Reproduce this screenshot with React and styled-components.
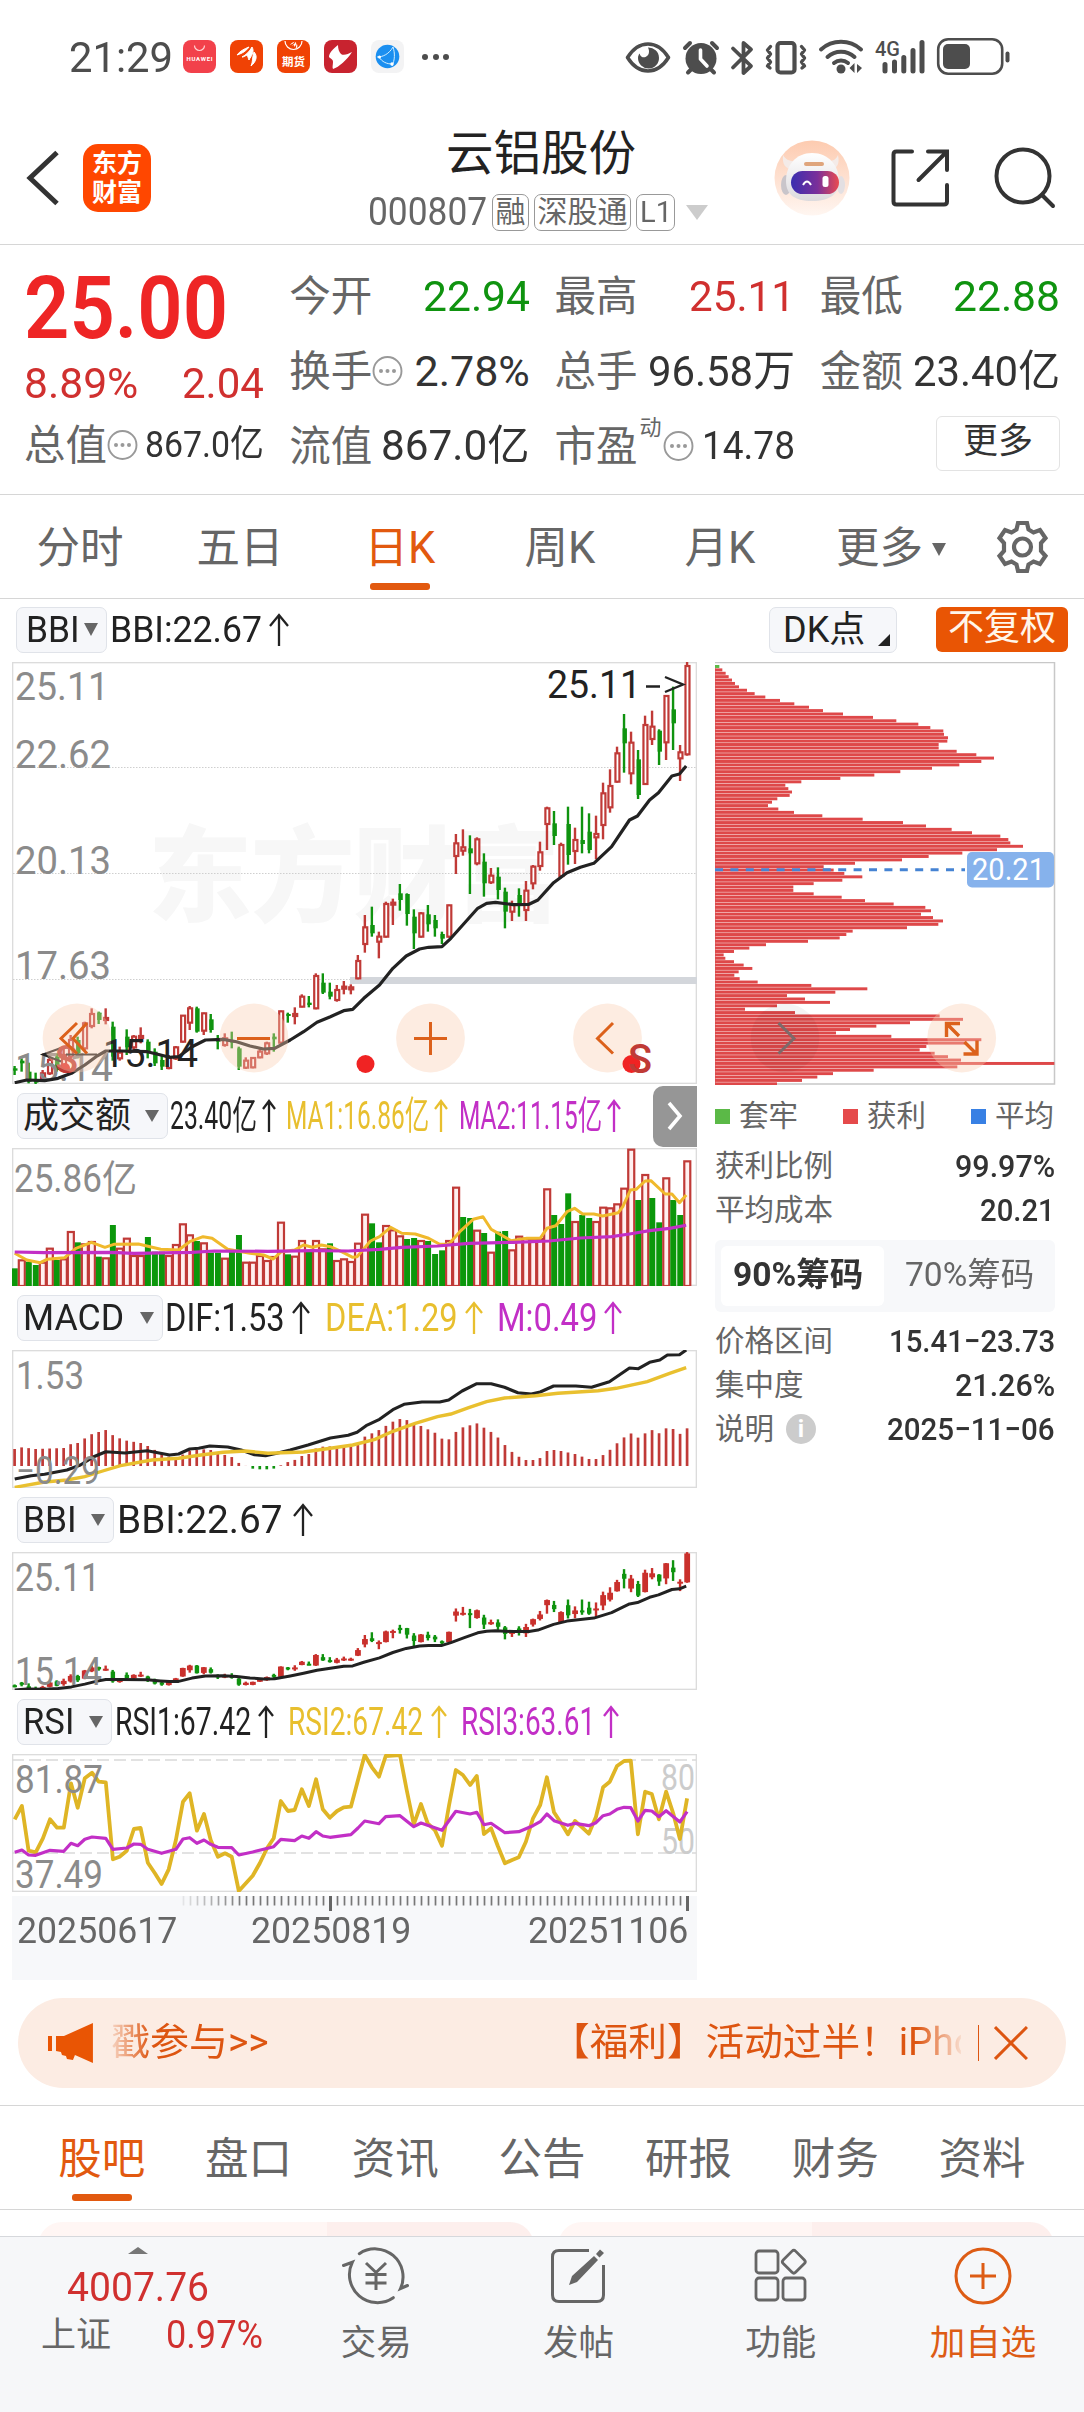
import { useLayoutEffect, useRef, useState } from 'react'
import styled, { createGlobalStyle } from 'styled-components'

const RED = '#c9302c'
const GREEN = '#0f930f'
const ORANGE = '#e95504'
const YELLOW = '#e8bf2e'
const PURPLE = '#c22fc6'
const BLACK = '#222'

const GlobalStyle = createGlobalStyle`
  * { box-sizing: border-box; }
  body {
    margin: 0;
    background: #fff;
    color: #333;
    font-family: Roboto, "Noto Sans CJK SC", sans-serif;
  }
`

/* ---------- data ---------- */

// one row per day: direction, high, body top, body bottom, low
const days = `g1428,1435,1442,1455 g1405,1412,1420,1445 g1418,1445,1475,1480 g1448,1470,1478,1484 r1440,1450,1465,1475
r1400,1410,1450,1455 g1390,1400,1440,1445 r1375,1395,1425,1440 r1335,1350,1400,1410 g1340,1350,1390,1405
r1295,1300,1375,1380 r1255,1272,1308,1315 g1265,1268,1290,1302 r1255,1284,1290,1303 g1295,1310,1400,1412
r1370,1388,1405,1412 g1318,1340,1372,1395 r1335,1340,1372,1380 r1312,1338,1342,1360 g1348,1355,1385,1405
g1375,1385,1420,1428 g1395,1410,1430,1440 r1395,1402,1434,1438 r1368,1372,1405,1410 r1275,1277,1355,1358
r1248,1255,1298,1320 g1250,1255,1325,1328 r1268,1270,1322,1335 g1272,1288,1320,1328 g1335,1345,1355,1378
r1330,1345,1365,1370 g1325,1350,1358,1375 g1370,1375,1430,1440 r1402,1412,1433,1437 r1402,1404,1432,1435
r1375,1385,1402,1405 r1355,1360,1390,1395 g1330,1340,1348,1385 r1262,1264,1358,1360 g1268,1272,1276,1298
r1252,1272,1278,1303 r1213,1220,1250,1252 g1218,1238,1245,1252 r1150,1158,1255,1258 g1150,1178,1208,1212
g1178,1205,1220,1228 r1185,1200,1230,1235 r1173,1190,1196,1213 r1183,1192,1198,1213 r1095,1113,1165,1168
r975,1012,1062,1088 g950,1005,1030,1040 r1025,1040,1055,1105 r935,942,1040,1043 r926,938,944,1005
g882,910,930,962 g910,912,972,1007 g958,980,1030,1077 r966,970,1040,1043 g945,973,1003,1025
g975,990,1015,1040 g1025,1032,1046,1062 r944,946,1040,1043 r732,760,798,852 r718,772,782,797
g736,775,790,912 r742,748,820,826 g790,815,880,920 r834,857,877,882 g832,860,900,928
g893,905,965,1015 r932,945,965,993 g895,915,945,980 r873,902,960,993 r825,830,880,898
r755,787,828,842 r650,655,702,780 g663,700,738,765 r758,765,858,862 g650,702,795,824
r713,750,783,822 g650,750,762,790 g670,725,780,790 r677,732,742,808 r578,610,705,748
r538,588,652,668 r470,490,575,578 g372,415,460,548 r425,458,550,583 g480,508,615,627
r377,405,582,585 r362,410,447,465 g418,422,485,525 r316,318,457,510 g290,358,400,480
r465,487,505,573 r216,228,493,497`
  .split(/\s+/)
  .map(s => [s[0], ...s.slice(1).split(',').map(Number)])

// negative = falling day
const volumes = [
  -565, 538, -545, -555, 545, 503, -540, 535, 453, -487, 490, 483, -530, 532, -435, 503, 473, 525, 525, -471,
  -515, -515, 525, 492, 430, 463, -483, 487, -518, -518, 533, -515, -465, 545, 545, 525, 540, 528, 425, -523,
  527, 480, -515, 480, 505, -490, 540, 535, 543, 488, 401, -430, -487, 435, 448, 466, -477, -474, 480, -483,
  -522, -511, 480, 320, -411, -414, 449, -459, 515, -455, -453, 508, 467, 473, 476, 474, 325, -405, -432, -340,
  423, -405, -414, 423, 380, 382, 370, 323, 206, -360, 282, -354, -427, 292, -360, -405, 241,
]

const pts = s => s.split(' ').map(p => p.split(',').map(Number))

const bbi = pts('33,1478 60,1470 100,1472 130,1465 160,1450 190,1425 215,1400 237,1383 270,1383 330,1385 360,1395 380,1402 400,1400 430,1370 460,1350 500,1348 530,1355 560,1368 590,1377 615,1375 650,1350 680,1325 710,1297 740,1280 770,1262 790,1258 815,1225 850,1185 880,1135 910,1098 940,1077 960,1072 990,1070 1010,1045 1040,1000 1070,955 1090,940 1110,937 1150,944 1185,943 1205,930 1240,878 1270,848 1300,832 1330,820 1370,770 1410,690 1428,678 1455,630 1475,608 1505,558 1522,552 1537,528')
const ma1 = pts('33,520 60,540 90,548 105,538 145,533 170,505 205,487 235,502 255,493 310,492 360,508 400,510 425,485 455,470 475,475 510,508 560,520 590,525 612,537 630,515 660,510 680,495 700,502 720,495 740,500 765,515 790,532 800,530 830,483 850,470 875,442 900,460 930,462 960,475 985,493 1005,493 1030,455 1060,418 1082,410 1100,448 1145,482 1180,475 1210,475 1225,445 1245,437 1270,395 1287,385 1305,402 1330,402 1350,408 1385,398 1395,380 1412,330 1425,328 1445,303 1458,302 1490,342 1505,342 1522,368 1537,345')
const ma2 = pts('33,516 100,518 250,517 300,520 430,517 480,513 600,514 700,512 780,513 850,508 900,502 980,498 1050,490 1150,487 1230,483 1300,474 1370,470 1410,462 1455,452 1500,445 1537,436')
const dif = pts('33,1197 70,1187 100,1183 150,1170 180,1155 210,1130 237,1115 280,1119 330,1112 380,1125 400,1122 425,1107 445,1105 470,1098 510,1101 540,1110 570,1124 595,1127 620,1120 650,1110 690,1095 740,1074 780,1066 800,1057 820,1037 850,1018 880,989 905,973 945,966 985,966 1005,960 1035,933 1068,911 1100,911 1130,922 1160,938 1190,942 1210,936 1240,918 1290,918 1325,922 1365,905 1410,864 1430,866 1455,847 1478,840 1495,825 1522,824 1537,810')
const dea = pts('33,1222 100,1206 150,1200 190,1190 230,1173 270,1157 340,1140 400,1135 450,1125 500,1117 550,1113 600,1120 680,1116 740,1105 790,1095 840,1078 880,1054 930,1030 980,1010 1010,1002 1050,983 1090,965 1130,954 1200,947 1250,940 1340,932 1380,925 1450,905 1500,880 1537,863')
const macd = pts('33,1107 49,1102 80,1107 143,1104 159,1092 174,1089 190,1075 206,1062 221,1056 237,1050 253,1066 268,1075 284,1082 315,1089 331,1098 347,1110 378,1130 394,1135 425,1112 441,1110 457,1108 472,1110 488,1120 504,1125 519,1131 535,1149 551,1158 566,1166 582,1168 598,1168 613,1166 629,1156 645,1146 660,1140 676,1128 692,1122 708,1105 723,1100 786,1097 802,1090 817,1070 849,1050 880,1025 896,1017 911,1020 943,1038 974,1058 990,1076 1006,1078 1021,1056 1037,1042 1068,1030 1100,1056 1115,1072 1131,1095 1147,1116 1162,1130 1178,1140 1194,1140 1210,1134 1225,1113 1241,1110 1257,1113 1288,1122 1304,1130 1319,1137 1335,1137 1351,1125 1366,1110 1382,1090 1398,1072 1413,1060 1429,1073 1445,1060 1460,1050 1476,1060 1492,1045 1508,1047 1523,1062 1539,1045')
const rsi2 = pts('33,988 49,948 64,1082 80,1087 96,1045 112,988 128,1013 143,1013 159,880 174,953 190,865 206,848 221,875 237,877 253,1108 268,1100 284,1082 300,1017 315,1014 331,1118 347,1150 362,1182 378,1138 394,1050 410,935 425,910 441,1022 457,972 472,1050 488,1100 504,1090 519,1100 535,1203 566,1157 582,1120 598,1075 613,1045 629,933 645,963 660,960 676,898 692,948 708,868 723,958 739,983 755,963 770,952 786,950 802,870 817,795 833,832 849,860 864,798 896,795 911,900 927,1003 943,942 958,1000 974,1020 990,1067 1006,945 1021,840 1037,855 1053,885 1068,858 1084,1032 1100,1015 1115,1068 1131,1120 1147,1110 1162,1102 1178,1055 1194,985 1210,945 1225,862 1241,967 1257,1000 1272,1033 1288,993 1304,1012 1319,1031 1335,980 1351,892 1366,875 1382,828 1398,813 1413,812 1429,1033 1445,905 1460,912 1476,988 1492,905 1508,970 1523,1047 1539,925')
const rsi3 = pts('33,1087 49,1080 64,1095 80,1096 112,1081 143,1084 159,1060 174,1067 190,1048 206,1041 237,1045 253,1078 284,1074 300,1062 315,1063 331,1078 362,1090 394,1078 410,1047 425,1043 441,1060 457,1050 472,1063 488,1072 519,1073 535,1095 566,1086 613,1070 629,1048 660,1052 676,1038 692,1045 708,1025 723,1038 739,1042 786,1034 802,1014 817,993 849,1001 864,980 896,977 927,1010 943,999 990,1021 1021,964 1053,972 1068,967 1084,1004 1100,1000 1131,1028 1162,1025 1194,1007 1210,995 1225,972 1241,992 1272,1006 1288,1000 1319,1007 1335,998 1351,977 1366,972 1382,958 1398,952 1413,953 1429,993 1445,961 1460,963 1476,980 1492,962 1523,996 1539,965')

const chips = [
  57, 66, 76, 85, 95, 104, 116, 140, 163, 195, 239, 282, 326, 368, 428, 518, 588, 654, 690, 729, 731, 743, 741,
  715, 715, 769, 828, 881, 843, 777, 695, 600, 522, 420, 303, 255, 264, 275, 268, 231, 215, 203, 234, 281, 366,
  487, 608, 677, 754, 815, 900, 924, 930, 968, 890, 786, 685, 605, 464, 370, 400, 432, 486, 426, 340, 279, 279,
  340, 424, 494, 580, 675, 692, 662, 698, 728, 714, 620, 457, 438, 418, 323, 197, 147, 101, 70, 75, 101, 130,
  156, 115, 102, 118, 172, 333, 501, 405, 260, 314, 389, 230, 134, 284, 718, 788, 629, 528, 449, 407, 573, 843,
  800, 678, 658, 703, 743, 782, 1062, 771, 520, 398, 351, 305, 230,
]

const dayX = i => 14.6 + i * 7.005
const line = (data, y) => data.map(([a, b]) => `${(a / 2.24).toFixed(1)},${y(b).toFixed(1)}`).join(' ')
const at = (data, x) => {
  const k = data.findIndex(p => p[0] >= x)
  if (k < 0) return data[data.length - 1][1]
  if (k === 0) return data[0][1]
  const [x0, y0] = data[k - 1]
  const [x1, y1] = data[k]
  return y0 + ((y1 - y0) * (x - x0)) / (x1 - x0)
}

/* ---------- text that shrinks or grows to its column ---------- */

const FitBox = styled.span`
  display: inline-block;
  flex: none;
  width: ${p => p.$w}px;
  white-space: nowrap;
  text-align: left;
`
const FitInner = styled.span`
  display: inline-block;
  transform-origin: 0 50%;
`
function Fit({ w, children }) {
  const ref = useRef(null)
  const [scale, setScale] = useState(1)
  useLayoutEffect(() => {
    setScale(w / ref.current.offsetWidth)
  }, [w, children])
  return (
    <FitBox $w={w}>
      <FitInner ref={ref} style={{ transform: `scaleX(${scale})` }}>{children}</FitInner>
    </FitBox>
  )
}

/* ---------- status bar ---------- */

const Page = styled.div`
  width: 1084px;
  height: 2412px;
  overflow: hidden;
  display: flex;
  flex-direction: column;
`
const StatusBar = styled.div`
  height: 113px;
  display: flex;
  align-items: center;
  padding: 0 74px 0 69px;
  color: #4d4d4d;
  font-size: 43px;
  line-height: 48px;
`
const AppIcons = styled.div`
  display: flex;
  gap: 14px;
  margin-left: 10px;
  svg { display: block; }
`
const More = styled.div`
  display: flex;
  gap: 4.5px;
  margin-left: 18px;
  i { width: 6px; height: 6px; border-radius: 50%; background: #4d4d4d; }
`
const Signals = styled.svg`
  display: block;
  margin-left: auto;
`

function StatusIcons() {
  return (
    <Signals width="386" height="40" viewBox="624 36 386 40" fill="none" stroke="#4d4d4d" strokeWidth="3.6" strokeLinecap="round" strokeLinejoin="round">
      <path d="M627.5 56.500Q636 43 648 43T668.500 56.500Q660 70 648 70T627.500 56.500Z" />
      <path d="M648 46.500a10.500 10.500 0 1 1-10 10.500c0-2 .8-3.500 1.500-4.500 1 3.500 4 4.500 6 3.500 3.500-1.500 4.500-5.500 2.500-9.500Z" fill="#4d4d4d" stroke="none" />
      <circle cx="701" cy="57.500" r="15.500" fill="#4d4d4d" stroke="none" />
      <path d="M700.500 49v9l6.500 7" stroke="#fff" strokeWidth="3.600" />
      <path d="M685 47l5-5M717 47l-5-5M688 71.500l3-3M714 71.500l-3-3" strokeWidth="4" />
      <path d="M733 47.500l18 17.500-7.500 7v-30l7.500 6.500-18 18" strokeWidth="3.800" />
      <rect x="777.500" y="42" width="17" height="29.500" rx="3" strokeWidth="4.200" />
      <path d="M770.500 45.500l-3 3.500 3 4-3 4 3 4-3 4 2.500 2M801.500 45.500l3 3.500-3 4 3 4-3 4 3 4-2.500 2" strokeWidth="3.400" />
      <path d="M821 48.500a30 30 0 0 1 40 0M827.500 56a20 20 0 0 1 27 0M834 62a11 11 0 0 1 14 0" strokeWidth="4" />
      <circle cx="841" cy="68" r="4.500" fill="#4d4d4d" stroke="none" />
      <path d="M849.500 67l5-5v10zM857 63l5 4-5 5z" fill="#4d4d4d" stroke="none" />
      <path d="M885 63.500v6.500M894.500 61v9M903.800 56.500V70M913 49.500V70M922 41.500V70" strokeWidth="5" />
      <text x="875" y="54.500" fontSize="20" fontWeight="500" fill="#4d4d4d" stroke="none" textLength="25" lengthAdjust="spacingAndGlyphs">4G</text>
      <rect x="938.200" y="38.200" width="64" height="34.500" rx="10" strokeWidth="2.600" />
      <rect x="943" y="43" width="27" height="25" rx="5" fill="#4d4d4d" stroke="none" />
      <path d="M1007.500 52.500v7" strokeWidth="4" />
    </Signals>
  )
}

const feather = 'M7 15c3-4 7-6 12-8-3 4-6 6-12 8zM12 17c4-2 8-6 10-10 3 5-1 9-3 13-1-2-1-4-2-5-2 1-3 2-5 2zM21 26c2-4 1-8 3-14 4 4 2 10-3 14z'

function Apps() {
  return (
    <AppIcons>
      <svg width="33" height="33" viewBox="0 0 33 33">
        <rect width="33" height="33" rx="8" fill="#f2414b" />
        <path d="M11.500 5.500a5 5 0 0 0 10 0" fill="none" stroke="#ffd3d3" strokeWidth="1.200" />
        <text x="3.500" y="21" fontSize="6" fontWeight="700" fill="#fff" textLength="26">HUAWEI</text>
      </svg>
      <svg width="33" height="33" viewBox="0 0 33 33">
        <rect width="33" height="33" rx="8" fill="#f04205" />
        <path d={feather} fill="#fff" stroke="#fff" strokeWidth="1" />
      </svg>
      <svg width="33" height="33" viewBox="0 0 33 33">
        <rect width="33" height="33" rx="8" fill="#f04205" />
        <path d="M8 1a8.500 8.500 0 0 0 17 0" fill="none" stroke="#fff" strokeWidth="1.200" />
        <path d={feather} fill="#fff" transform="translate(10 -1) scale(.4)" />
        <text x="5" y="26" fontSize="11.500" fontWeight="700" fill="#fff">期货</text>
      </svg>
      <svg width="33" height="33" viewBox="0 0 33 33">
        <rect width="33" height="33" rx="8" fill="#c8232f" />
        <path d="M14 5c-5 4-9 8-9 12 2 2 4 2 4 5s-1 5 0 7c6-2 14-9 19-17-4 2-8 4-11 2-2-2-3-5-3-9z" fill="#fff" />
      </svg>
      <svg width="33" height="33" viewBox="0 0 33 33">
        <rect width="33" height="33" rx="8" fill="#f3f3f4" />
        <circle cx="16.500" cy="16.500" r="11.800" fill="#1b8ff0" />
        <path d="M6 17c6 0 12-3 16-10M8 17c3 5 8 7 13 7M22 7c2 6 2 13-1 19" fill="none" stroke="#d4efff" strokeWidth="1" />
        <circle cx="8.500" cy="17" r="1.500" fill="#fff" />
        <circle cx="21" cy="24" r="1.700" fill="#fff" />
      </svg>
    </AppIcons>
  )
}

/* ---------- title ---------- */

const Header = styled.header`
  height: 132px;
  flex: none;
  display: flex;
  align-items: flex-start;
  padding: 0 28px 0 26px;
  border-bottom: 1.5px solid #d6d6d6;
`
const Back = styled.svg`
  margin: 37px 0 0;
  flex: none;
`
const Brand = styled.div`
  width: 68px;
  height: 68px;
  margin: 30.5px 0 0 23px;
  border-radius: 15px;
  background: #ff4700;
  color: #fff;
  font-size: 25px;
  font-weight: 700;
  line-height: 29px;
  padding-top: 5px;
  text-align: center;
`
const TitleBlock = styled.div`
  width: 344px;
  margin: 12px 0 0 217px;
  display: flex;
  flex-direction: column;
`
const Title = styled.div`
  font-size: 47.5px;
  line-height: 58px;
  color: #222;
  padding-left: 78px;
`
const Codes = styled.div`
  display: flex;
  align-items: center;
  height: 38px;
  margin-top: 10px;
  font-size: 38px;
  color: #666;
`
const Tag = styled.span`
  height: 37px;
  margin-left: 5px;
  padding: 0 2.5px;
  border: 1.5px solid #999;
  border-radius: 7px;
  font-size: 30px;
  line-height: 34px;
  white-space: nowrap;
`
const Caret = styled.i`
  flex: none;
  margin-left: ${p => p.$ml || 0}px;
  border: ${p => p.$s / 2}px solid transparent;
  border-top: ${p => p.$h}px solid ${p => p.$c || '#666'};
  border-bottom: 0;
`
const HeaderIcons = styled.div`
  display: flex;
  margin: 27px 0 0 auto;
  align-items: center;
  svg { display: block; }
  svg + svg { margin-left: 40px; }
  svg:last-child { margin-left: 44px; }
`

function Robot() {
  return (
    <svg width="76" height="76" viewBox="0 0 76 76">
      <defs>
        <linearGradient id="halo" x1="0" y1="0" x2="0" y2="1">
          <stop offset="0" stopColor="#fdcbb0" />
          <stop offset="1" stopColor="#fff6f1" />
        </linearGradient>
        <linearGradient id="visor" x1="0" y1="0" x2="1" y2="0">
          <stop offset="0" stopColor="#3a2fb0" />
          <stop offset=".55" stopColor="#7a2f9a" />
          <stop offset="1" stopColor="#ea4b50" />
        </linearGradient>
        <linearGradient id="shell" x1="0" y1="0" x2="0" y2="1">
          <stop offset="0" stopColor="#fff" />
          <stop offset="1" stopColor="#dcdadd" />
        </linearGradient>
      </defs>
      <circle cx="38" cy="38" r="37.500" fill="url(#halo)" />
      <path d="M9 15c-1 9 2 13 9 15l6-9c-8 1-12-1-15-6zM64 15c2 9-1 13-7 15l-6-9c7 1 11-1 13-6z" fill="#f4ebe8" />
      <ellipse cx="12" cy="45" rx="5" ry="10" fill="#c9c5ca" />
      <ellipse cx="67" cy="45" rx="4" ry="9" fill="#e3dfe2" />
      <path d="M38 13c17 0 27 13 27 28 0 13-9 20-27 20S12 54 12 41c0-16 10-28 26-28z" fill="url(#shell)" />
      <rect x="30" y="22" width="20" height="4" rx="2" fill="#dfa57c" />
      <rect x="17" y="31" width="48" height="23" rx="11.500" fill="url(#visor)" />
      <path d="M29 45q4-7 8 0" fill="none" stroke="#fff" strokeWidth="2" />
      <rect x="48.500" y="36" width="6" height="11" rx="2.500" fill="#fff" />
    </svg>
  )
}

/* ---------- quote ---------- */

const Quote = styled.section`
  height: 250px;
  flex: none;
  display: grid;
  grid-template-columns: repeat(4, 1fr);
  column-gap: 25px;
  padding: 14px 24px 0;
  border-bottom: 1.5px solid #d6d6d6;
  white-space: nowrap;
`
const Column = styled.div`
  display: flex;
  flex-direction: column;
`
const Cell = styled.div`
  height: ${p => p.$h || 75}px;
  display: flex;
  align-items: center;
  justify-content: space-between;
  font-size: ${p => p.$size || 43}px;
  font-weight: ${p => p.$weight || 400};
  line-height: 1.1;
  color: ${p => p.$c || '#333'};
`
const Label = styled.span`
  font-size: 41.5px;
  color: #666;
  display: flex;
  align-items: center;
  padding-top: 1px;
`
const Sup = styled.span`
  font-size: 22px;
  align-self: flex-start;
  margin: -8px 1px 0 2px;
`
const MoreButton = styled.button`
  width: 124px;
  height: 55px;
  margin-left: auto;
  border: 1.5px solid #e3e3e3;
  border-radius: 6px;
  background: #fff;
  color: #333;
  font: inherit;
  font-size: 35px;
  line-height: 48px;
  padding: 0 0 3px;
  margin-top: -6px;
`
const Dots = () => (
  <svg width="31" height="31" viewBox="0 0 31 31">
    <circle cx="15.500" cy="15" r="14" fill="none" stroke="#999" strokeWidth="1.900" />
    <circle cx="9" cy="15" r="2" fill="#999" />
    <circle cx="15.500" cy="15" r="2" fill="#999" />
    <circle cx="22" cy="15" r="2" fill="#999" />
  </svg>
)

/* ---------- tabs ---------- */

const Periods = styled.nav`
  height: 104px;
  flex: none;
  display: grid;
  grid-template-columns: repeat(6, 160px) 1fr;
  border-bottom: 1.5px solid #d6d6d6;
`
const Tab = styled.div`
  display: flex;
  flex-direction: column;
  align-items: center;
  padding-top: 26px;
  font-size: 43.5px;
  line-height: 56px;
  color: ${p => (p.$on ? '#e2590f' : '#666')};
  white-space: nowrap;
  &::after {
    content: '';
    width: 60px;
    height: 6.5px;
    border-radius: 3px;
    margin-top: 6px;
    background: ${p => (p.$on ? '#e2590f' : 'transparent')};
  }
`
const TabLine = styled.span`
  display: flex;
  align-items: center;
  gap: 9px;
  margin-right: -22px;
`
const Gear = styled.svg`
  margin: 25px 0 0 36px;
`

/* ---------- indicator bars ---------- */

const Toolbar = styled.div`
  height: 63px;
  flex: none;
  display: flex;
  align-items: center;
  padding: 0 16px 2px;
  font-size: 36px;
  color: ${BLACK};
`
const Pick = styled.div`
  width: ${p => p.$w}px;
  height: 46px;
  flex: none;
  display: flex;
  align-items: center;
  justify-content: space-between;
  padding: 0 8px 0 ${p => p.$pad || 5}px;
  border: 1.5px solid #e0e3e9;
  border-radius: 7px;
  background: #f6f7fa;
  font-size: 36px;
  line-height: 40px;
  color: ${BLACK};
  white-space: nowrap;
`
const Reading = styled.span`
  display: flex;
  align-items: center;
  gap: ${p => p.$gap || 5}px;
  margin-left: ${p => p.$ml || 3}px;
  font-size: ${p => p.$size || 39}px;
  line-height: 44px;
  color: ${p => p.$c || BLACK};
`
const Up = ({ w = 14 }) => (
  <svg width={w} height="34" viewBox={`0 0 ${w} 34`} fill="none" stroke="currentColor" strokeWidth="2.300">
    <path d={`M${w / 2} 33V2M1 ${w / 2 + 3}L${w / 2} 2L${w - 1} ${w / 2 + 3}`} />
  </svg>
)
const DKButton = styled(Pick)`
  position: relative;
  margin-left: auto;
  padding-left: 13px;
  &::after {
    content: '';
    position: absolute;
    right: 6px;
    bottom: 6px;
    border-left: 12px solid transparent;
    border-bottom: 12px solid ${BLACK};
  }
`
const Adjust = styled.div`
  width: 132px;
  height: 45px;
  margin-left: 39px;
  border-radius: 6px;
  background: ${ORANGE};
  color: #fff6ea;
  font-size: 36px;
  line-height: 43px;
  text-align: center;
`
const Charts = styled.div`
  display: flex;
  padding-left: 12px;
`
const Left = styled.div`
  width: 685px;
  flex: none;
  svg { display: block; }
`
const Right = styled.div`
  width: 340px;
  margin-left: 18px;
  svg { display: block; }
`
const Head = styled.div`
  height: 64px;
  display: flex;
  align-items: center;
  padding-left: 5px;
`
const Fold = styled.div`
  width: 44px;
  height: 61px;
  margin-left: auto;
  border-radius: 10px 0 0 10px;
  background: #969696;
  display: flex;
  align-items: center;
  justify-content: center;
`
const Axis = styled.div`
  height: 84px;
  margin-top: 4px;
  background: #f7f8fa;
`
const Dates = styled.div`
  display: grid;
  grid-template-columns: 234px 277px 160px;
  padding-left: 5px;
  font-size: 37px;
  line-height: 38px;
  color: #666;
`

const Value = ({ x, y, w, c = '#8b8b8b', size = 38, children }) => (
  <text x={x} y={y} fontSize={size} fill={c} textLength={w} lengthAdjust="spacingAndGlyphs">{children}</text>
)
const Frame = ({ y, h }) => <rect x="12.500" y={y + 0.5} width="684" height={h - 1} fill="none" stroke="#dcdcdc" strokeWidth="1.700" />
const Round = ({ x, grey, children }) => (
  <g fill="none" stroke={grey ? '#7d6a6a' : '#dc611b'} strokeWidth="3">
    <circle cx={x} cy="1038" r="34.400" fill={grey ? '#000' : '#fbcdb0'} fillOpacity={grey ? 0.045 : 0.38} stroke="none" />
    {children}
  </g>
)

function MainChart() {
  const y = v => 590 + v / 3
  return (
    <svg width="685" height="422" viewBox="12 662 685 422">
      <text x="148" y="914" fontSize="104" fontWeight="900" fill="#f7f7f7" textLength="412">东方财富</text>
      <Frame y={662} h={422} />
      {[767.5, 873.5, 979.5].map(g => (
        <line key={g} x1="13" x2="696" y1={g} y2={g} stroke="#cfcfcf" strokeDasharray="1.500 1.500" />
      ))}
      <rect x="350" y="977" width="347" height="7" fill="#d3d6db" />
      {days.map(([dir, hi, top, bottom, lo], i) => {
        const c = dir === 'r' ? '#c03a37' : GREEN
        const h = Math.max((bottom - top) / 3, 2)
        return (
          <g key={i}>
            <line x1={dayX(i)} x2={dayX(i)} y1={y(hi)} y2={y(lo)} stroke={c} strokeWidth="2.400" />
            {dir === 'r'
              ? <rect x={dayX(i) - 1.6} y={y(top)} width="4" height={h} fill="#fff" stroke={c} strokeWidth="2.200" />
              : <rect x={dayX(i) - 1.5} y={y(top)} width="4.400" height={h} fill={c} />}
          </g>
        )
      })}
      <Value x="15" y="699.500" w="94">25.11</Value>
      <Value x="15" y="768" w="96">22.62</Value>
      <Value x="15" y="874" w="96">20.13</Value>
      <Value x="15" y="979" w="96">17.63</Value>
      <Value x="15" y="1081" w="98">15.14</Value>
      <polyline points={line(bbi, y)} fill="none" stroke="#222" strokeWidth="3.200" strokeLinejoin="round" />
      <Value x="547" y="697.500" w="94" c={BLACK} size="39">25.11</Value>
      <path d="M646 686.500h14M665 677l18 7.500-18 7.500" fill="none" stroke={BLACK} strokeWidth="2.400" />
      <Value x="103" y="1067" w="95" c={BLACK} size="39">15.14</Value>
      <path d="M61 1048l-18 6.500 18 7M66 1054.500h31" fill="none" stroke={BLACK} strokeWidth="2.200" />
      <circle cx="65" cy="1068" r="5" fill="#e02a28" />
      <text x="55" y="1073" fontSize="38" fontWeight="500" fill="#c03a35" textLength="23" lengthAdjust="spacingAndGlyphs">S</text>
      <Round x={77}><path d="M77 1023l-16 15.500 16 15M87 1023l-14 15.500 14 15" /></Round>
      <Round x={254}><path d="M237 1038.500h33" /></Round>
      <Round x={430.500}><path d="M414 1038.500h33M430.500 1022v33" /></Round>
      <Round x={607.500}><path d="M613 1023l-15.500 15.500 15.500 15" /></Round>
      <circle cx="365.500" cy="1064" r="9" fill="#f02323" />
      <circle cx="631.500" cy="1064" r="9" fill="#f02323" />
      <text x="628" y="1073" fontSize="40" fontWeight="500" fill="#c03a35" textLength="24" lengthAdjust="spacingAndGlyphs">S</text>
    </svg>
  )
}

function VolumeChart() {
  const y = v => 1080 + v / 3
  return (
    <svg width="685" height="138" viewBox="12 1148 685 138">
      <Frame y={1148} h={138} />
      {volumes.map((v, i) =>
        v < 0
          ? <rect key={i} x={dayX(i) - 2.8} y={y(-v)} width="6" height={1286 - y(-v)} fill="#0b970b" />
          : <rect key={i} x={dayX(i) - 2.8} y={y(v) + 1} width="6" height={1285 - y(v)} fill="#fff0f0" stroke="#c03a37" strokeWidth="2.200" />
      )}
      <polyline points={line(ma1, y)} fill="none" stroke="#f0b92c" strokeWidth="3" strokeLinejoin="round" />
      <polyline points={line(ma2, y)} fill="none" stroke={PURPLE} strokeWidth="3.200" />
      <Value x="14" y="1192" w="123">25.86亿</Value>
    </svg>
  )
}

function MacdChart() {
  const y = v => 1080 + v / 3
  return (
    <svg width="685" height="138" viewBox="12 1350 685 138">
      <Frame y={1350} h={138} />
      {days.map((d, i) => {
        const v = at(macd, dayX(i) * 2.24)
        return <line key={i} x1={dayX(i)} x2={dayX(i)} y1={y(v)} y2="1466" stroke={v > 1159 ? GREEN : '#c03a37'} strokeWidth="2.700" />
      })}
      <polyline points={line(dif, y)} fill="none" stroke="#222" strokeWidth="3.100" strokeLinejoin="round" />
      <polyline points={line(dea, y)} fill="none" stroke="#e9c02f" strokeWidth="3.400" />
      <Value x="16" y="1388.500" w="68">1.53</Value>
      <Value x="16" y="1483.500" w="84">−0.29</Value>
    </svg>
  )
}

function BbiChart() {
  const y = v => 1552 + (v - 215) * 0.1092
  return (
    <svg width="685" height="138" viewBox="12 1552 685 138">
      <Frame y={1552} h={138} />
      {days.map(([dir, hi, top, bottom, lo], i) => {
        const c = dir === 'r' ? RED : GREEN
        return (
          <g key={i} fill={c}>
            <rect x={dayX(i) - 1.2} y={y(hi)} width="2.400" height={y(lo) - y(hi)} />
            <rect x={dayX(i) - (dir === 'r' ? 2.8 : 2)} y={y(top)} width={dir === 'r' ? 5.8 : 4.4} height={Math.max(y(bottom) - y(top), 2)} />
          </g>
        )
      })}
      <polyline points={line(bbi, y)} fill="none" stroke="#222" strokeWidth="3" strokeLinejoin="round" />
      <Value x="15" y="1590.500" w="85">25.11</Value>
      <Value x="15" y="1685" w="87">15.14</Value>
    </svg>
  )
}

function RsiChart() {
  const y = v => 1490 + v / 3
  return (
    <svg width="685" height="138" viewBox="12 1754 685 138">
      <Frame y={1754} h={138} />
      <path d="M12 1760h684M12 1853h684" stroke="#d9d9d9" strokeWidth="1.500" strokeDasharray="12 5" />
      <Value x="661" y="1789.500" w="34" c="#ccc" size="36">80</Value>
      <Value x="661" y="1853.500" w="34" c="#ccc" size="36">50</Value>
      <polyline points={line(rsi2, y)} fill="none" stroke="#dfb525" strokeWidth="3.800" strokeLinejoin="round" />
      <polyline points={line(rsi3, y)} fill="none" stroke={PURPLE} strokeWidth="3.200" strokeLinejoin="round" />
      <Value x="15" y="1793" w="88">81.87</Value>
      <Value x="15" y="1888" w="88">37.49</Value>
    </svg>
  )
}

function Ticks() {
  const n = Array.from({ length: 73 }, (_, i) => i)
  return (
    <svg width="685" height="16" viewBox="12 1896 685 16" stroke="#777">
      {n.map(i => (
        <line key={i} x1={183.5 + i * 7} x2={183.5 + i * 7} y1="1896" y2="1905.500" strokeWidth="1.700" opacity={Math.min(1, 0.15 + i * 0.1)} />
      ))}
      <path d="M330.500 1896v15M687.500 1896v15" strokeWidth="3" stroke="#666" />
    </svg>
  )
}

function ChipChart() {
  return (
    <svg width="341" height="423" viewBox="715 662 341 423">
      <path d="M715 662.500h339.500v421.500H715" fill="none" stroke="#c8c8c8" strokeWidth="1.500" />
      {chips.map((u, i) => (
        <rect key={i} x="715" y={665 + i * 3.393} width={(u - 44) / 3} height="2.950" fill={i ? '#de4849' : '#5bb947'} />
      ))}
      <line x1="715" x2="715" y1="668" y2="1084" stroke="#d94a4c" />
      <line x1="715" x2="965" y1="869.700" y2="869.700" stroke="#4583d3" strokeWidth="3" strokeDasharray="8 7.400" />
      <rect x="967" y="852" width="87" height="35.500" rx="5" fill="#86b2ec" />
      <Value x="972" y="880" w="73" c="#fff" size="31">20.21</Value>
      <Round x={785} grey><path d="M778.500 1023l15.500 15.500-15.500 15" /></Round>
      <Round x={961.700}>
        <path d="M946.500 1037v-13.500H960M947 1024l12 12M964.500 1042l12 12M963.500 1054h13.500v-13.500" strokeWidth="3.400" />
      </Round>
    </svg>
  )
}

/* ---------- chip panel ---------- */

const Legend = styled.div`
  height: 59px;
  display: flex;
  align-items: center;
  justify-content: space-between;
  font-size: 29.5px;
  line-height: 59px;
  color: #666;
  padding: 4px 1px 0 0;
  span { display: flex; align-items: center; gap: 9px; }
`
const LegendDot = styled.i`
  width: 15px;
  height: 15px;
  background: ${p => p.$c};
`
const Stat = styled.div`
  height: 44px;
  display: flex;
  align-items: center;
  font-size: 29.5px;
  line-height: 44px;
  color: #666;
  b {
    margin-left: auto;
    font-size: 32px;
    font-weight: 500;
    color: #333;
  }
`
const Segment = styled.div`
  height: 72px;
  margin: 8px 0 7px;
  padding: 6px;
  display: grid;
  grid-template-columns: 163px 1fr;
  border-radius: 6px;
  background: #f7f8fa;
`
const SegmentItem = styled.div`
  border-radius: 6px;
  background: ${p => (p.$on ? '#fff' : 'none')};
  color: ${p => (p.$on ? '#333' : '#666')};
  font-weight: ${p => (p.$on ? 700 : 400)};
  font-size: 33px;
  line-height: 57px;
  padding-left: ${p => (p.$on ? 12 : 21)}px;
`
const Info = styled.span`
  width: 30px;
  height: 30px;
  margin-left: 12px;
  border-radius: 50%;
  background: #ccc;
  color: #fff;
  font-size: 24px;
  font-weight: 700;
  line-height: 30px;
  text-align: center;
`

/* ---------- banner ---------- */

const Banner = styled.div`
  height: 90px;
  flex: none;
  margin: 18px 18px 17px;
  padding: 0 38px 0 29px;
  border-radius: 45px;
  background: #fcece3;
  display: flex;
  align-items: center;
  color: #dd5511;
`
const Marquee = styled.div`
  width: 851px;
  margin-left: 16px;
  display: flex;
  justify-content: space-between;
  overflow: hidden;
  white-space: nowrap;
  font-size: 38px;
  line-height: 52px;
  padding-bottom: 3px;
  mask-image: linear-gradient(90deg, rgba(0, 0, 0, .15), #000 40px, #000 805px, rgba(0, 0, 0, .1));
`
const Promo = styled.span`
  margin-right: -15px;
`
const Rule = styled.i`
  width: 1.5px;
  height: 36px;
  margin: 0 15px 0 17px;
  background: #dd5511;
`

/* ---------- bottom ---------- */

const Sections = styled.nav`
  height: 105px;
  flex: none;
  display: grid;
  grid-template-columns: repeat(7, 146.700px);
  padding-left: 28.500px;
  border-top: 1.5px solid #d6d6d6;
  border-bottom: 1.5px solid #d6d6d6;
`
const Cards = styled.div`
  height: 26px;
  flex: none;
  overflow: hidden;
  display: flex;
  gap: 24px;
  padding: 12px 30px 0 38px;
`
const Card = styled.div`
  width: 496px;
  height: 60px;
  border-radius: 24px 24px 0 0;
  background: linear-gradient(90deg, #fff6f4 ${p => p.$split}px, #fdefed ${p => p.$split}px);
`
const BottomBar = styled.footer`
  flex: 1;
  display: grid;
  grid-template-columns: 275px repeat(4, 202.300px);
  border-top: 1.5px solid #d6d8dc;
  background: #f6f7f9;
`
const Index = styled.div`
  display: flex;
  flex-direction: column;
  align-items: center;
  padding-top: 10px;
  color: #d0302f;
  font-size: 41px;
  line-height: 48px;
`
const UpCaret = styled.i`
  margin-bottom: 9px;
  border: 10px solid transparent;
  border-bottom: 7px solid #777;
  border-top: 0;
`
const IndexRow = styled.div`
  align-self: stretch;
  display: flex;
  justify-content: space-between;
  padding: 0 12px 0 41px;
  font-size: 38px;
`
const IndexName = styled.span`
  font-size: 35px;
  line-height: 50px;
  color: #666;
`
const Action = styled.div`
  display: flex;
  flex-direction: column;
  align-items: center;
  padding-top: 9px;
  gap: 13px;
  font-size: 35.500px;
  line-height: 48px;
  color: ${p => (p.$hot ? '#dd5c15' : '#666')};
`

function Quotes() {
  return (
    <Quote>
      <Column>
        <Cell $h={98} $size={88} $weight={600} $c="#ee2525"><Fit w={204}>25.00</Fit></Cell>
        <Cell $h={53} $c="#d0302f"><Fit w={114}>8.89%</Fit><Fit w={82}>2.04</Fit></Cell>
        <Cell $h={70} $size={37}>
          <Label>总值<Dots /></Label>
          <Fit w={119}>867.0亿</Fit>
        </Cell>
      </Column>
      <Column>
        <Cell $c={GREEN}><Label>今开</Label><Fit w={107}>22.94</Fit></Cell>
        <Cell><Label>换手<Dots /></Label><Fit w={115}>2.78%</Fit></Cell>
        <Cell $size={42}><Label>流值</Label><Fit w={149}>867.0亿</Fit></Cell>
      </Column>
      <Column>
        <Cell $c="#d0302f"><Label>最高</Label><Fit w={106}>25.11</Fit></Cell>
        <Cell><Label>总手</Label><Fit w={147}>96.58万</Fit></Cell>
        <Cell $size={39}><Label>市盈<Sup>动</Sup><Dots /></Label><Fit w={93}>14.78</Fit></Cell>
      </Column>
      <Column>
        <Cell $c={GREEN}><Label>最低</Label><Fit w={107}>22.88</Fit></Cell>
        <Cell><Label>金额</Label><Fit w={147}>23.40亿</Fit></Cell>
        <Cell><MoreButton>更多</MoreButton></Cell>
      </Column>
    </Quote>
  )
}

export default function App() {
  return (
    <Page>
      <GlobalStyle />
      <StatusBar>
        <Fit w={104}>21:29</Fit>
        <Apps />
        <More><i /><i /><i /></More>
        <StatusIcons />
      </StatusBar>
      <Header>
        <Back width="34" height="56" viewBox="0 0 34 56" fill="none" stroke="#333" strokeWidth="5">
          <path d="M31 2.500L4 28l27 25.500" />
        </Back>
        <Brand>东方<br />财富</Brand>
        <TitleBlock>
          <Title>云铝股份</Title>
          <Codes>
            <Fit w={119}>000807</Fit>
            <Tag>融</Tag>
            <Tag>深股通</Tag>
            <Tag><Fit w={32}>L1</Fit></Tag>
            <Caret $s={22} $h={15} $c="#ccc" $ml={11} />
          </Codes>
        </TitleBlock>
        <HeaderIcons>
          <Robot />
          <svg width="60" height="60" viewBox="0 0 60 60" fill="none" stroke="#333" strokeWidth="4" strokeLinecap="round">
            <path d="M22 3.500H6.500Q3.500 3.500 3.500 6.500V53.500Q3.500 56.500 6.500 56.500H54Q57 56.500 57 53.500V37M38 3.500H57V22M56 4.500L28.500 32" />
          </svg>
          <svg width="62" height="62" viewBox="0 0 62 62" fill="none" stroke="#333" strokeWidth="4" strokeLinecap="round">
            <circle cx="29" cy="29" r="26.500" />
            <path d="M48 48l11 11" />
          </svg>
        </HeaderIcons>
      </Header>
      <Quotes />
      <Periods>
        <Tab>分时</Tab>
        <Tab>五日</Tab>
        <Tab $on>日K</Tab>
        <Tab>周K</Tab>
        <Tab>月K</Tab>
        <Tab><TabLine>更多<Caret $s={15} $h={13} /></TabLine></Tab>
        <Gear width="53" height="54" viewBox="0 0 53 54" fill="none" stroke="#666" strokeWidth="4.200" strokeLinejoin="miter">
          <path d="M22 3h9l1.500 6.500 5 3L44 10l5.500 8-4.500 5v8l4.500 5-5.500 8-6.500-2.500-5 3L31 51h-9l-1.500-6.500-5-3L9 44l-5.500-8L8 31v-8l-4.500-5L9 10l6.500 2.500 5-3z" />
          <circle cx="26.500" cy="27" r="8.500" />
        </Gear>
      </Periods>
      <Toolbar>
        <Pick $w={91} $pad={9}><Fit w={54}>BBI</Fit><Caret $s={15} $h={13} /></Pick>
        <Reading $size={36.500} $ml={3} $gap={7}><Fit w={152}>BBI:22.67</Fit><Up w={20} /></Reading>
        <DKButton $w={128}>DK点</DKButton>
        <Adjust>不复权</Adjust>
      </Toolbar>
      <Charts>
        <Left>
          <MainChart />
          <Head>
            <Pick $w={151}>成交额<Caret $s={15} $h={12} /></Pick>
            <Reading $ml={2}><Fit w={87}>23.40亿</Fit><Up /></Reading>
            <Reading $c={YELLOW} $ml={10}><Fit w={143}>MA1:16.86亿</Fit><Up /></Reading>
            <Reading $c={PURPLE} $ml={11}><Fit w={143}>MA2:11.15亿</Fit><Up /></Reading>
            <Fold>
              <svg width="18" height="30" viewBox="0 0 18 30" fill="none" stroke="#fff" strokeWidth="3.600"><path d="M3 2l11 13L3 28" /></svg>
            </Fold>
          </Head>
          <VolumeChart />
          <Head>
            <Pick $w={146}><Fit w={101}>MACD</Fit><Caret $s={15} $h={12} /></Pick>
            <Reading $gap={7} $size={38} $ml={2}><Fit w={120}>DIF:1.53</Fit><Up w={18} /></Reading>
            <Reading $gap={7} $size={38} $c={YELLOW} $ml={15}><Fit w={133}>DEA:1.29</Fit><Up w={18} /></Reading>
            <Reading $gap={7} $size={38} $c={PURPLE} $ml={14}><Fit w={100}>M:0.49</Fit><Up w={18} /></Reading>
          </Head>
          <MacdChart />
          <Head>
            <Pick $w={97}><Fit w={54}>BBI</Fit><Caret $s={15} $h={12} /></Pick>
            <Reading $gap={10}><Fit w={166}>BBI:22.67</Fit><Up w={20} /></Reading>
          </Head>
          <BbiChart />
          <Head>
            <Pick $w={95}><Fit w={51}>RSI</Fit><Caret $s={15} $h={12} /></Pick>
            <Reading $gap={7}><Fit w={136}>RSI1:67.42</Fit><Up w={16} /></Reading>
            <Reading $gap={8} $c={YELLOW} $ml={14}><Fit w={135}>RSI2:67.42</Fit><Up w={16} /></Reading>
            <Reading $gap={8} $c={PURPLE} $ml={14}><Fit w={134}>RSI3:63.61</Fit><Up w={16} /></Reading>
          </Head>
          <RsiChart />
          <Axis>
            <Ticks />
            <Dates><Fit w={160}>20250617</Fit><Fit w={160}>20250819</Fit><Fit w={160}>20251106</Fit></Dates>
          </Axis>
        </Left>
        <Right>
          <ChipChart />
          <Legend>
            <span><LegendDot $c="#5bb947" />套牢</span>
            <span><LegendDot $c="#e54a4b" />获利</span>
            <span><LegendDot $c="#3880e4" />平均</span>
          </Legend>
          <Stat>获利比例<b><Fit w={100}>99.97%</Fit></b></Stat>
          <Stat>平均成本<b><Fit w={75}>20.21</Fit></b></Stat>
          <Segment>
            <SegmentItem $on><Fit w={130}>90%筹码</Fit></SegmentItem>
            <SegmentItem><Fit w={129}>70%筹码</Fit></SegmentItem>
          </Segment>
          <Stat>价格区间<b><Fit w={166}>15.41−23.73</Fit></b></Stat>
          <Stat>集中度<b><Fit w={100}>21.26%</Fit></b></Stat>
          <Stat>说明<Info>i</Info><b><Fit w={168}>2025−11−06</Fit></b></Stat>
        </Right>
      </Charts>
      <Banner>
        <svg width="48" height="42" viewBox="0 0 48 42" fill={ORANGE}>
          <path d="M1 14h4v15H1zM9 14h8L46 1v40l-18-8-2 5-6-1-1-3-4-1-1-3-5-1z" />
        </svg>
        <Marquee>
          <Fit w={158}>戳参与&gt;&gt;</Fit>
          <Promo><Fit w={425}>【福利】活动过半！iPho</Fit></Promo>
        </Marquee>
        <Rule />
        <svg width="34" height="34" viewBox="0 0 34 34" fill="none" stroke="#dd5511" strokeWidth="3"><path d="M1 1l32 32M33 1L1 33" /></svg>
      </Banner>
      <Sections>
        {['股吧', '盘口', '资讯', '公告', '研报', '财务', '资料'].map((name, i) => (
          <Tab key={name} $on={i === 0}>{name}</Tab>
        ))}
      </Sections>
      <Cards>
        <Card $split={289} />
        <Card $split={254} />
      </Cards>
      <BottomBar>
        <Index>
          <UpCaret />
          <Fit w={142}>4007.76</Fit>
          <IndexRow><IndexName>上证</IndexName><Fit w={97}>0.97%</Fit></IndexRow>
        </Index>
        <Action>
          <svg width="68" height="60" viewBox="0 0 68 60" fill="none" stroke="#666" strokeWidth="3" strokeLinecap="round">
            <path d="M17.300 7.700A28 28 0 0 1 58.500 42.500L65.500 39.500M51.300 51.700A28 28 0 0 1 10.300 16.300L1.500 19.500" />
            <path d="M24 17l10 9.500L44 17M34 26.500V44M23.500 28.500h21M23.500 37h21" strokeLinecap="butt" />
          </svg>
          交易
        </Action>
        <Action>
          <svg width="56" height="60" viewBox="0 -2 56 60" fill="none" stroke="#666" strokeWidth="3">
            <path d="M39 2.500H9Q2.500 2.500 2.500 9V47Q2.500 53.500 9 53.500H47Q53.500 53.500 53.500 47V17" />
            <path d="M19 37l3-9 22-20 4 4-21 22zM46 6l4-4.500 4 3.500-4.500 4.500z" fill="#666" stroke="none" />
          </svg>
          发帖
        </Action>
        <Action>
          <svg width="54" height="60" viewBox="0 -3 54 60" fill="none" stroke="#666" strokeWidth="2.800">
            <rect x="2" y="2" width="22" height="22" rx="3" />
            <rect x="2" y="29" width="22" height="22" rx="3" />
            <rect x="29" y="29" width="22" height="22" rx="3" />
            <rect x="31" y="4" width="17.500" height="17.500" rx="2.500" transform="rotate(45 39.800 12.800)" />
          </svg>
          功能
        </Action>
        <Action $hot>
          <svg width="58" height="60" viewBox="0 0 58 60" fill="none" stroke="#dd5c15" strokeWidth="3">
            <circle cx="29" cy="30" r="27" />
            <path d="M16 30h26M29 17v26" />
          </svg>
          加自选
        </Action>
      </BottomBar>
    </Page>
  )
}
